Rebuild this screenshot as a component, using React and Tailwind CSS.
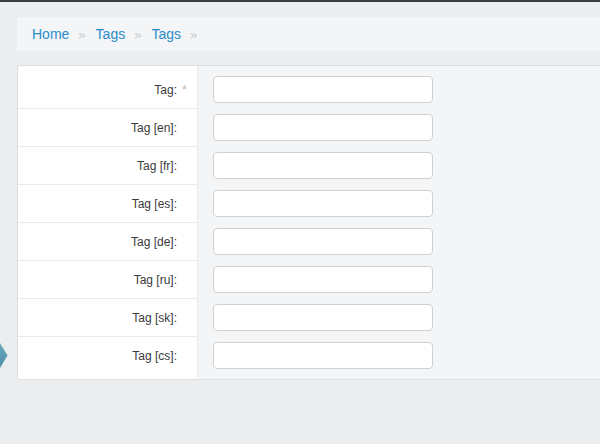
import React from 'react';

const rows = [
  { label: 'Tag:', required: true },
  { label: 'Tag [en]:' },
  { label: 'Tag [fr]:' },
  { label: 'Tag [es]:' },
  { label: 'Tag [de]:' },
  { label: 'Tag [ru]:' },
  { label: 'Tag [sk]:' },
  { label: 'Tag [cs]:' },
];

function Breadcrumb() {
  const items = ['Home', 'Tags', 'Tags'];
  return (
    <div className="ml-[17px] h-[34px] bg-[#f4f5f6] flex items-center pl-[15px] text-[14px]">
      {items.map((item, i) => (
        <React.Fragment key={i}>
          <a className="text-[#2b8ccb] leading-none">{item}</a>
          <span className="text-[#c8cbce] text-[13px] ml-[9px] mr-[10px] leading-none">»</span>
        </React.Fragment>
      ))}
    </div>
  );
}

export default function App() {
  return (
    <div
      className="relative w-[600px] h-[444px] overflow-hidden bg-[#ebedee]"
      style={{ fontFamily: '"Liberation Sans", Arial, sans-serif' }}
    >
      <div className="h-[2px] bg-[#3b3e40]" />
      <div className="pt-[15px]">
        <Breadcrumb />
      </div>

      {/* Form card */}
      <div className="ml-[17px] mt-[14px] w-[600px] border border-[#dcdee0] rounded-[3px] overflow-hidden">
        {rows.map((row, i) => {
          const first = i === 0;
          const last = i === rows.length - 1;
          const pad = first ? 'pt-[10px] pb-[5px]' : last ? 'pt-[5px] pb-[10px]' : 'py-[5px]';
          return (
            <div key={i} className="flex">
              <div
                className={`w-[180px] shrink-0 bg-white border-r border-[#e9ebed] ${pad} ${
                  last ? '' : 'border-b border-b-[#e8eaec]'
                }`}
              >
                <div className="h-[27px] flex items-center justify-end pr-[20px] text-[12px] text-[#3a3a3a]">
                  <span className="relative">
                    {row.label}
                    {row.required && (
                      <span className="absolute left-full ml-[5px] top-0 text-[#b5b8bb]">*</span>
                    )}
                  </span>
                </div>
              </div>
              <div className={`flex-1 bg-[#f4f5f7] pl-[15px] ${pad} ${last ? '' : 'pb-[6px]'}`}>
                <input
                  type="text"
                  className="block w-[220px] h-[27px] bg-white border border-[#cfd1d3] rounded-[4px] outline-none"
                />
              </div>
            </div>
          );
        })}
      </div>

      {/* sidebar toggle arrow */}
      <svg className="absolute left-0 top-[343px]" width="8" height="25" viewBox="0 0 8 25">
        <defs>
          <linearGradient id="arr" x1="0" y1="0" x2="0" y2="1">
            <stop offset="0" stopColor="#6aa9bd" />
            <stop offset="1" stopColor="#4f91a8" />
          </linearGradient>
        </defs>
        <polygon points="0,0 7.5,12.5 0,25" fill="url(#arr)" />
      </svg>
    </div>
  );
}
